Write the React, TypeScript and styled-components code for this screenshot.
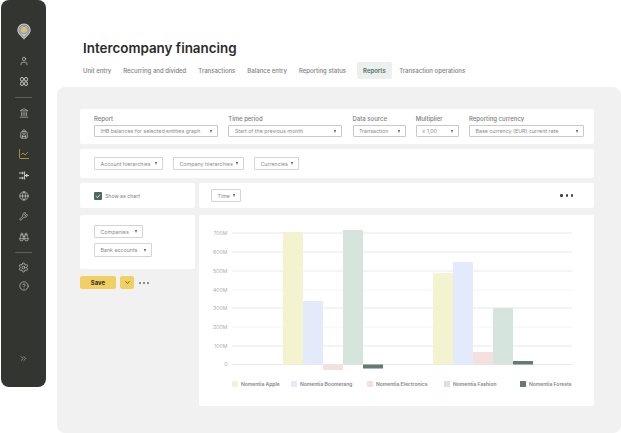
import React from 'react';
import styled, { createGlobalStyle } from 'styled-components';
import {
  Backpack,
  Binoculars,
  ChartLine,
  ChevronDown,
  ChevronsRight,
  CircleHelp,
  Globe,
  Landmark,
  Settings,
  User,
  Wrench,
} from 'lucide-react';

const tabs = [
  'Unit entry',
  'Recurring and divided',
  'Transactions',
  'Balance entry',
  'Reporting status',
  'Reports',
  'Transaction operations',
];

const fields = [
  { label: 'Report', value: 'IHB balances for selected entities graph', width: 124 },
  { label: 'Time period', value: 'Start of the previous month', width: 114 },
  { label: 'Data source', value: 'Transaction', width: 53 },
  { label: 'Multiplier', value: 'x 1,00', width: 43 },
  { label: 'Reporting currency', value: 'Base currency (EUR) current rate', width: 115 },
];

const ticks = ['700M', '600M', '500M', '400M', '300M', '200M', '100M', '0'];
const tickY = [18, 37, 56, 75, 93, 112, 131, 149.5];
const faintTicks = ['400M', '200M'];
const baseline = 149.5;

const series = [
  { name: 'Nomentia Apple', color: '#f3f3d0', width: 59 },
  { name: 'Nomentia Boomerang', color: '#e2eafb', width: 76 },
  { name: 'Nomentia Electronics', color: '#f5e0e0', width: 77 },
  { name: 'Nomentia Fashion', color: '#d6e4de', width: 76 },
  { name: 'Nomentia Forests', color: '#647a72', width: 60 },
];

// offsets from the baseline, negative values go below the axis
const groups = [
  { x: 84, values: [132.5, 63.5, -5.5, 134.5, -4] },
  { x: 234, values: [91.5, 102.5, 12.5, 56.5, 3.5] },
];

const GlobalStyle = createGlobalStyle`
  html, body {
    margin: 0;
    padding: 0;
    height: 100%;
    background: #fff;
    overflow: hidden;
  }
  body {
    font-family: 'Inter', 'Open Sans', sans-serif;
  }
`;

const Page = styled.div`
  display: flex;
  width: 621px;
  height: 433px;
  overflow: hidden;
`;

const Sidebar = styled.nav`
  display: flex;
  flex-direction: column;
  align-items: center;
  flex: none;
  width: 45px;
  height: 387px;
  margin-left: 1px;
  padding: 23px 0 18px;
  box-sizing: border-box;
  background: #333530;
  border-radius: 8px;
  color: #e6e6e2;
`;

const Logo = styled.div`
  display: flex;
  height: 27.5px;
`;

const NavGroup = styled.div`
  display: flex;
  flex-direction: column;
  align-items: center;
`;

const NavIcon = styled.div<{ $active?: boolean; $height?: number }>`
  display: flex;
  align-items: center;
  justify-content: center;
  width: 20px;
  height: ${({ $height }) => $height ?? 20.67}px;
  color: ${({ $active }) => ($active ? '#cdb04a' : '#dededa')};
`;

const NavDivider = styled.div`
  width: 17px;
  height: 1px;
  margin: 5px 0;
  background: #5d5f5a;
`;

const NavBottom = styled.div`
  margin-top: auto;
`;

const Main = styled.main`
  display: flex;
  flex-direction: column;
  flex: 1;
  min-width: 0;
  margin-left: 11px;
`;

const Header = styled.header`
  display: flex;
  flex-direction: column;
  height: 87px;
  padding: 40px 0 0 26px;
  box-sizing: border-box;
`;

const Title = styled.h1`
  margin: 0;
  font-size: 13.4px;
  line-height: 17px;
  font-weight: 600;
  color: #2b2b2b;
`;

const Tabs = styled.div`
  display: flex;
  align-items: center;
  height: 17px;
  margin: 5px 0 0 -6px;
`;

const Tab = styled.div<{ $active?: boolean }>`
  display: flex;
  align-items: center;
  height: 17px;
  margin: ${({ $active }) => ($active ? '0 1.5px 0 5px' : '0')};
  padding: 0 6px;
  border-radius: 2px;
  font-size: 6px;
  font-weight: ${({ $active }) => ($active ? 600 : 500)};
  color: ${({ $active }) => ($active ? '#5a6d66' : '#808080')};
  background: ${({ $active }) => ($active ? '#ebefed' : 'transparent')};
`;

const Panel = styled.section`
  flex: 1;
  padding: 22px 27px 0 23px;
  background: #f1f1f1;
  border-radius: 8px;
`;

const Card = styled.div`
  background: #fff;
  border-radius: 2px;
`;

const FilterCard = styled(Card)`
  display: flex;
  justify-content: space-between;
  height: 35px;
  padding: 6px 10px 0 14px;
  box-sizing: border-box;
`;

const Field = styled.div<{ $width: number }>`
  display: flex;
  flex-direction: column;
  width: ${({ $width }) => $width}px;
`;

const FieldLabel = styled.div`
  height: 10px;
  font-size: 6px;
  line-height: 7px;
  font-weight: 500;
  color: #7d7d7d;
`;

const Select = styled.div`
  display: flex;
  align-items: center;
  justify-content: space-between;
  height: 12px;
  padding: 0 5px 0 5.5px;
  box-sizing: border-box;
  border: 1px solid #c9c9c9;
  border-radius: 1px;
  font-size: 5.3px;
  color: #8b8b8b;
  white-space: nowrap;
`;

const Caret = styled.span`
  flex: none;
  width: 0;
  height: 0;
  margin-left: 3px;
  border-left: 1.8px solid transparent;
  border-right: 1.8px solid transparent;
  border-top: 3px solid #555;
`;

const HierarchyCard = styled(Card)`
  display: flex;
  align-items: center;
  gap: 10px;
  height: 29px;
  margin-top: 5px;
  padding-left: 14px;
`;

const Dropdown = styled(Select)<{ $width: number; $height?: number }>`
  width: ${({ $width }) => $width}px;
  height: ${({ $height }) => $height ?? 13}px;
  border-color: #d4d4d4;
`;

const Workspace = styled.div`
  display: grid;
  grid-template-columns: 115px 395px;
  column-gap: 4px;
  margin-top: 5px;
`;

const Column = styled.div`
  display: flex;
  flex-direction: column;
  gap: 7px;
`;

const ToolbarCard = styled(Card)`
  display: flex;
  align-items: center;
  justify-content: space-between;
  height: 25px;
  padding: 0 21px 0 12px;
`;

const ChartToggle = styled(Card)`
  display: flex;
  align-items: center;
  gap: 3px;
  height: 25px;
  padding-left: 14px;
  font-size: 5.2px;
  color: #7f7f7f;
`;

const CheckBox = styled.span`
  display: flex;
  align-items: center;
  justify-content: center;
  width: 8px;
  height: 8px;
  background: #4a6b60;
  border-radius: 1px;
`;

const GroupingCard = styled(Card)`
  display: flex;
  flex-direction: column;
  align-items: flex-start;
  gap: 5px;
  height: 54px;
  padding: 10px 0 0 14px;
  box-sizing: border-box;
`;

const SaveRow = styled.div`
  display: flex;
  align-items: center;
`;

const SaveButton = styled.button`
  width: 36px;
  height: 13px;
  padding: 0;
  border: 0;
  border-radius: 2px;
  background: #f0cf63;
  font-family: inherit;
  font-size: 6px;
  font-weight: 700;
  color: #33332b;
`;

const SaveMenu = styled.button`
  display: flex;
  align-items: center;
  justify-content: center;
  width: 14px;
  height: 13px;
  margin-left: 4px;
  padding: 0;
  border: 0;
  border-radius: 2px;
  background: #f0cf63;
  color: #33332b;
`;

const Dots = styled.div<{ $gap: number; $size: number; $color: string }>`
  display: flex;
  gap: ${({ $gap }) => $gap}px;
  span {
    width: ${({ $size }) => $size}px;
    height: ${({ $size }) => $size}px;
    border-radius: 50%;
    background: ${({ $color }) => $color};
  }
`;

const SaveDots = styled(Dots)`
  margin-left: 5px;
`;

const ChartCard = styled(Card)`
  display: flex;
  flex-direction: column;
  height: 191px;
`;

const Plot = styled.svg`
  display: block;
  flex: none;
`;

const AxisLabel = styled.text`
  font-size: 5.2px;
  font-family: 'Inter', sans-serif;
  fill: #adadad;
`;

const Legend = styled.div`
  display: flex;
  padding: 6px 0 0 33px;
`;

const LegendItem = styled.div<{ $width: number }>`
  display: flex;
  align-items: center;
  gap: 3px;
  width: ${({ $width }) => $width}px;
  font-size: 5px;
  font-weight: 600;
  color: #858585;
  white-space: nowrap;
`;

const Swatch = styled.span<{ $color: string }>`
  flex: none;
  width: 6px;
  height: 6px;
  background: ${({ $color }) => $color};
`;

function LogoMark() {
  return (
    <svg width="14" height="17" viewBox="0 0 14 17" fill="none">
      <path d="M7 16.5 1.9 11.2A6.6 6.6 0 0 1 7 .4a6.6 6.6 0 0 1 5.1 10.8Z" fill="#c9c9c5" />
      <path d="M7 14.4 3 10.2A5 5 0 0 1 7 2a5 5 0 0 1 4 8.2Z" stroke="#6a6b66" strokeWidth=".7" />
      <circle cx="7" cy="7" r="3.6" stroke="#6a6b66" strokeWidth=".6" />
      <circle cx="7" cy="7" r="2" fill="#eebf3a" />
    </svg>
  );
}

function CloverIcon() {
  return (
    <svg width="8" height="9" viewBox="0 0 8 9" fill="none" stroke="currentColor" strokeWidth=".9">
      <rect x=".5" y=".5" width="3" height="3.6" rx="1.4" />
      <rect x="4.5" y=".5" width="3" height="3.6" rx="1.4" />
      <rect x=".5" y="4.9" width="3" height="3.6" rx="1.4" />
      <rect x="4.5" y="4.9" width="3" height="3.6" rx="1.4" />
    </svg>
  );
}

function MergeIcon() {
  return (
    <svg width="10" height="9" viewBox="0 0 10 9" fill="none" stroke="currentColor" strokeWidth=".9">
      <path d="M0 2h4.2M3 .8 4.4 2 3 3.2M0 7h4.2M3 5.8 4.4 7 3 8.2" />
      <path d="M5.6 .5v8" />
      <path d="M6.5 4.5H10" />
      <path d="M6.5 4.5 8 3.3v2.4Z" fill="currentColor" />
    </svg>
  );
}

function App() {
  const navTop = [<User size={10} strokeWidth={1.5} />, <CloverIcon />];
  const navMiddle = [
    <Landmark size={10} strokeWidth={1.4} />,
    <Backpack size={10} strokeWidth={1.4} />,
    <ChartLine size={12} strokeWidth={1.5} />,
    <MergeIcon />,
    <Globe size={10} strokeWidth={1.5} />,
    <Wrench size={9} strokeWidth={1.6} />,
    <Binoculars size={10} strokeWidth={1.4} />,
  ];
  const navBottom = [<Settings size={11} strokeWidth={1.4} />, <CircleHelp size={10} strokeWidth={1.4} />];

  return (
    <Page>
      <GlobalStyle />
      <Sidebar>
        <Logo>
          <LogoMark />
        </Logo>
        <NavGroup>
          {navTop.map((icon, i) => (
            <NavIcon key={i}>{icon}</NavIcon>
          ))}
        </NavGroup>
        <NavDivider />
        <NavGroup>
          {navMiddle.map((icon, i) => (
            <NavIcon key={i} $active={i === 2}>
              {icon}
            </NavIcon>
          ))}
        </NavGroup>
        <NavDivider />
        <NavGroup>
          {navBottom.map((icon, i) => (
            <NavIcon key={i} $height={18.5}>
              {icon}
            </NavIcon>
          ))}
        </NavGroup>
        <NavBottom>
          <NavIcon>
            <ChevronsRight size={9} strokeWidth={1.4} />
          </NavIcon>
        </NavBottom>
      </Sidebar>

      <Main>
        <Header>
          <Title>Intercompany financing</Title>
          <Tabs>
            {tabs.map((tab) => (
              <Tab key={tab} $active={tab === 'Reports'}>
                {tab}
              </Tab>
            ))}
          </Tabs>
        </Header>

        <Panel>
          <FilterCard>
            {fields.map((field) => (
              <Field key={field.label} $width={field.width}>
                <FieldLabel>{field.label}</FieldLabel>
                <Select>
                  {field.value}
                  <Caret />
                </Select>
              </Field>
            ))}
          </FilterCard>

          <HierarchyCard>
            <Dropdown $width={69}>
              Account hierarchies
              <Caret />
            </Dropdown>
            <Dropdown $width={71}>
              Company hierarchies
              <Caret />
            </Dropdown>
            <Dropdown $width={45}>
              Currencies
              <Caret />
            </Dropdown>
          </HierarchyCard>

          <Workspace>
            <Column>
              <ChartToggle>
                <CheckBox>
                  <svg width="6" height="6" viewBox="0 0 6 6" fill="none" stroke="#fff" strokeWidth=".8">
                    <path d="M1 3.2 2.4 4.6 5 1.6" />
                  </svg>
                </CheckBox>
                Show as chart
              </ChartToggle>
              <GroupingCard>
                <Dropdown $width={49}>
                  Companies
                  <Caret />
                </Dropdown>
                <Dropdown $width={58} $height={14}>
                  Bank accounts
                  <Caret />
                </Dropdown>
              </GroupingCard>
              <SaveRow>
                <SaveButton>Save</SaveButton>
                <SaveMenu>
                  <ChevronDown size={7} strokeWidth={2.4} />
                </SaveMenu>
                <SaveDots $gap={2} $size={2} $color="#6b6c66">
                  <span />
                  <span />
                  <span />
                </SaveDots>
              </SaveRow>
            </Column>

            <Column>
              <ToolbarCard>
                <Dropdown $width={30}>
                  Time
                  <Caret />
                </Dropdown>
                <Dots $gap={3} $size={2.2} $color="#45463f">
                  <span />
                  <span />
                  <span />
                </Dots>
              </ToolbarCard>
              <ChartCard>
                <Plot width="395" height="160" viewBox="0 0 395 160">
                  {ticks.map((tick, i) => (
                    <g key={tick}>
                      <AxisLabel x="28.5" y={tickY[i] + 1.9} textAnchor="end">
                        {tick}
                      </AxisLabel>
                      <line
                        x1="33"
                        x2="373"
                        y1={tickY[i]}
                        y2={tickY[i]}
                        stroke={faintTicks.includes(tick) ? '#f4f4f4' : '#e8e8e8'}
                        strokeWidth="1"
                      />
                    </g>
                  ))}
                  {groups.map((group) =>
                    group.values.map((value, i) => (
                      <rect
                        key={`${group.x}-${i}`}
                        x={group.x + i * 20}
                        y={value > 0 ? baseline - value : baseline}
                        width="20"
                        height={Math.abs(value)}
                        fill={series[i].color}
                      />
                    )),
                  )}
                </Plot>
                <Legend>
                  {series.map((item) => (
                    <LegendItem key={item.name} $width={item.width}>
                      <Swatch $color={item.color} />
                      {item.name}
                    </LegendItem>
                  ))}
                </Legend>
              </ChartCard>
            </Column>
          </Workspace>
        </Panel>
      </Main>
    </Page>
  );
}

export default App;
